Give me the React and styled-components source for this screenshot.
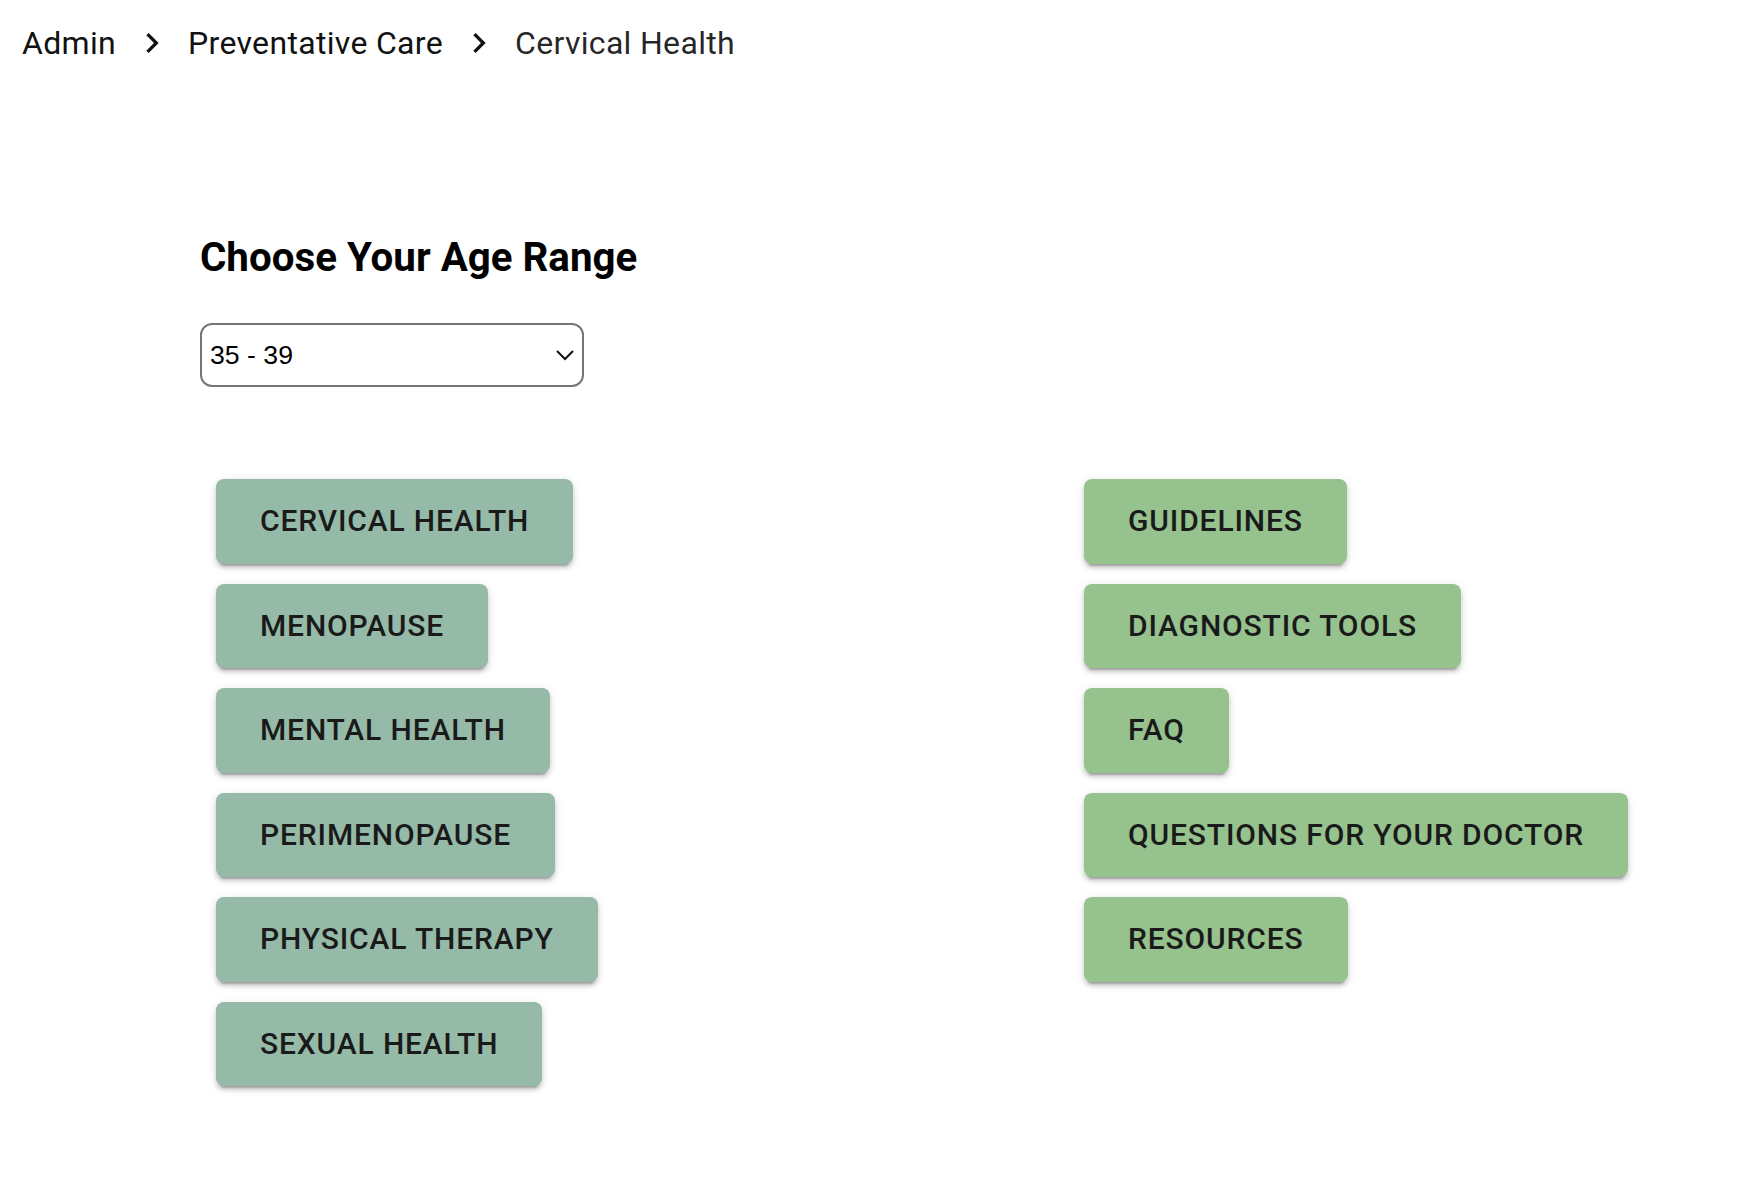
import styled, { createGlobalStyle } from 'styled-components';

const GlobalStyle = createGlobalStyle`
  html, body {
    margin: 0;
    padding: 0;
    background: #ffffff;
    font-family: Roboto, "Noto Sans", sans-serif;
    color: rgba(0, 0, 0, 0.87);
  }
`;

const Page = styled.div`
  padding: 19px 20px 60px 22px;
`;

const Crumbs = styled.nav`
  display: flex;
  align-items: center;
  font-size: 32px;
  line-height: 48px;
  color: #111;
`;

const Crumb = styled.span`
  color: ${p => (p.$current ? 'rgba(0,0,0,0.87)' : '#111')};
  letter-spacing: 0.01em;
`;

const Separator = styled.span`
  display: flex;
  width: 40px;
  height: 40px;
  margin: 0 16px;
  color: #111;
`;

const Content = styled.section`
  margin-left: 178px;
  margin-top: 167px;
`;

const Title = styled.h2`
  margin: 0;
  font-size: 40.3px;
  line-height: 48px;
  font-weight: 700;
  color: #000;
`;

const SelectWrap = styled.div`
  position: relative;
  width: 384px;
  margin-top: 41px;
`;

const AgeSelect = styled.select`
  appearance: none;
  width: 100%;
  height: 64px;
  box-sizing: border-box;
  border: 2px solid #767676;
  border-radius: 12px;
  background: #fff;
  padding: 0 40px 0 8px;
  font-family: "Liberation Sans", Arial, sans-serif;
  font-size: 26.67px;
  color: #000;
`;

const Arrow = styled.svg`
  position: absolute;
  right: 8px;
  top: 23px;
  width: 22px;
  height: 18px;
  pointer-events: none;
`;

const Columns = styled.div`
  display: grid;
  grid-template-columns: 868px 1fr;
  margin-top: 92px;
  padding-left: 16px;
`;

const Column = styled.div`
  display: flex;
  flex-direction: column;
  align-items: flex-start;
  gap: 20px;
`;

const TopicButton = styled.button`
  border: 0;
  border-radius: 8px;
  padding: 16px 44px;
  background: ${p => p.$tone === 'resource' ? '#96c28e' : '#96baa8'};
  font-family: Roboto, sans-serif;
  font-size: 30px;
  font-weight: 500;
  line-height: 1.75;
  letter-spacing: 0.02857em;
  text-transform: uppercase;
  color: #1a1a1a;
  cursor: pointer;
  box-shadow: 0px 6px 2px -4px rgba(0,0,0,0.2), 0px 4px 4px 0px rgba(0,0,0,0.14), 0px 2px 10px 0px rgba(0,0,0,0.12);
`;

const topics = ['Cervical Health', 'Menopause', 'Mental Health', 'Perimenopause', 'Physical Therapy', 'Sexual Health'];
const resources = ['Guidelines', 'Diagnostic Tools', 'FAQ', 'Questions for your doctor', 'Resources'];

function Chevron() {
  return (
    <Separator>
      <svg viewBox="0 0 24 24" width="40" height="40" fill="currentColor">
        <path d="M10 6 8.59 7.41 13.17 12l-4.58 4.59L10 18l6-6z" />
      </svg>
    </Separator>
  );
}

export default function App() {
  return (
    <Page>
      <GlobalStyle />
      <Crumbs>
        <Crumb>Admin</Crumb>
        <Chevron />
        <Crumb>Preventative Care</Crumb>
        <Chevron />
        <Crumb $current>Cervical Health</Crumb>
      </Crumbs>
      <Content>
        <Title>Choose Your Age Range</Title>
        <SelectWrap>
          <AgeSelect defaultValue="35-39">
            <option value="35-39">35 - 39</option>
          </AgeSelect>
          <Arrow viewBox="0 0 22 18">
            <path d="M3 5 L11 13 L19 5" fill="none" stroke="#111" strokeWidth="2" />
          </Arrow>
        </SelectWrap>
        <Columns>
          <Column>
            {topics.map(t => <TopicButton key={t}>{t}</TopicButton>)}
          </Column>
          <Column>
            {resources.map(t => <TopicButton key={t} $tone="resource">{t}</TopicButton>)}
          </Column>
        </Columns>
      </Content>
    </Page>
  );
}
